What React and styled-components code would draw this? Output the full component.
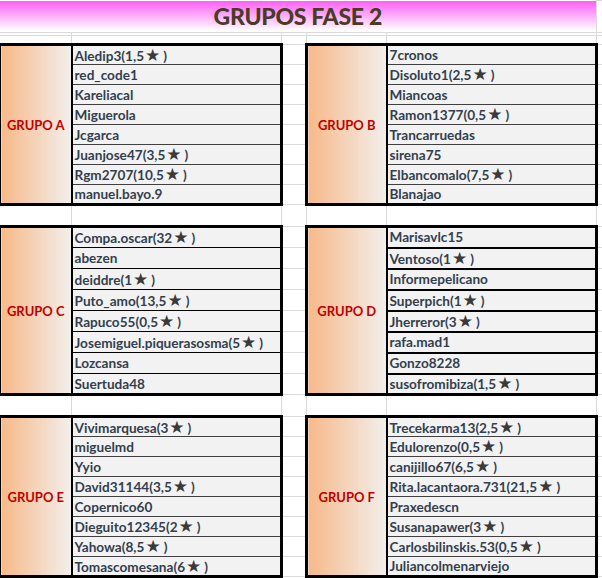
import styled, { createGlobalStyle } from "styled-components";

const GlobalStyles = createGlobalStyle`
  html, body {
    margin: 0;
    padding: 0;
    background: #ffffff;
  }
  body {
    font-family: Lato, "Open Sans", sans-serif;
    overflow: hidden;
  }
`;

const groups = [
  {
    left: {
      name: "GRUPO A",
      players: ["Aledip3(1,5★)", "red_code1", "Kareliacal", "Miguerola", "Jcgarca", "Juanjose47(3,5★)", "Rgm2707(10,5★)", "manuel.bayo.9"],
      line: "1px solid #404040",
    },
    right: {
      name: "GRUPO B",
      players: ["7cronos", "Disoluto1(2,5★)", "Miancoas", "Ramon1377(0,5★)", "Trancarruedas", "sirena75", "Elbancomalo(7,5★)", "Blanajao"],
      line: "1px solid #404040",
    },
    rowHeight: 20,
  },
  {
    left: {
      name: "GRUPO C",
      players: ["Compa.oscar(32★)", "abezen", "deiddre(1★)", "Puto_amo(13,5★)", "Rapuco55(0,5★)", "Josemiguel.piquerasosma(5★)", "Lozcansa", "Suertuda48"],
      line: "1px solid #000000",
    },
    right: {
      name: "GRUPO D",
      players: ["Marisavlc15", "Ventoso(1★)", "Informepelicano", "Superpich(1★)", "Jherreror(3★)", "rafa.mad1", "Gonzo8228", "susofromibiza(1,5★)"],
      line: "2px solid #000000",
    },
    rowHeight: 21,
  },
  {
    left: {
      name: "GRUPO E",
      players: ["Vivimarquesa(3★)", "miguelmd", "Yyio", "David31144(3,5★)", "Copernico60", "Dieguito12345(2★)", "Yahowa(8,5★)", "Tomascomesana(6★)"],
      line: "1px solid #404040",
    },
    right: {
      name: "GRUPO F",
      players: ["Trecekarma13(2,5★)", "Edulorenzo(0,5★)", "canijillo67(6,5★)", "Rita.lacantaora.731(21,5★)", "Praxedescn", "Susanapawer(3★)", "Carlosbilinskis.53(0,5★)", "Juliancolmenarviejo"],
      line: "1px solid #404040",
    },
    rowHeight: 20,
  },
];

const Sheet = styled.table`
  border-collapse: collapse;
  table-layout: fixed;
  width: 604px;
  margin-left: -2px;
`;

const Col = styled.col`
  width: ${(p) => p.$w}px;
`;

const Row = styled.tr`
  height: ${(p) => p.$h}px;
`;

const Cell = styled.td`
  border: 1px solid #dadada;
  padding: 0;
`;

const TitleCell = styled.td`
  border: none;
  border-bottom: 1px solid #dadada;
  padding: 0;
  background: linear-gradient(#ff5ef5, #ffffff 96%);
  text-align: center;
  vertical-align: middle;
  color: #4a3b27;
  font-weight: 900;
  font-size: 23px;
  letter-spacing: -0.3px;
`;

const LabelCell = styled.td`
  border: 3px solid #000000;
  border-right: 2px solid #000000;
  padding: 0;
  background: linear-gradient(to right, #f7b989, #f2efec);
  text-align: center;
  vertical-align: middle;
  color: #c00000;
  font-weight: 700;
  font-size: 13px;
`;

const NameCell = styled.td`
  border-left: 2px solid #000000;
  border-right: 3px solid #000000;
  border-top: ${(p) => (p.$first ? "3px solid #000000" : p.$line)};
  border-bottom: ${(p) => (p.$last ? "3px solid #000000" : p.$line)};
  padding: 0 0 0 2px;
  background: #f2f2f2;
  color: #333f4f;
  font-weight: 700;
  font-size: 13.6px;
  white-space: nowrap;
  vertical-align: middle;
  line-height: 16px;
`;

const Star = styled.span`
  font-family: "DejaVu Sans", sans-serif;
  font-size: 17px;
  line-height: 16px;
  color: #3a3a3a;
  margin: 0 3px 0 1px;
`;

const PlayerName = ({ text }) => {
  const parts = text.split("★");
  if (parts.length === 1) return text;
  return (
    <>
      {parts[0]}
      <Star>★</Star>
      {parts[1]}
    </>
  );
};

const GroupRows = ({ group }) => {
  const { left, right, rowHeight } = group;
  return left.players.map((_, i) => {
    const first = i === 0;
    const last = i === left.players.length - 1;
    return (
      <Row key={i} $h={rowHeight}>
        {first && <LabelCell rowSpan={8}>{left.name}</LabelCell>}
        <NameCell $first={first} $last={last} $line={left.line}>
          <PlayerName text={left.players[i]} />
        </NameCell>
        <Cell />
        {first && <LabelCell rowSpan={8}>{right.name}</LabelCell>}
        <NameCell $first={first} $last={last} $line={right.line}>
          <PlayerName text={right.players[i]} />
        </NameCell>
        <Cell />
      </Row>
    );
  });
};

const BlankRow = ({ h }) => (
  <Row $h={h}>
    <Cell />
    <Cell />
    <Cell />
    <Cell />
    <Cell />
    <Cell />
  </Row>
);

const App = () => {
  return (
    <>
      <GlobalStyles />
      <Sheet>
        <colgroup>
          <Col $w={72} />
          <Col $w={210} />
          <Col $w={25} />
          <Col $w={80} />
          <Col $w={210} />
          <Col $w={7} />
        </colgroup>
        <tbody>
          <Row $h={32}>
            <TitleCell colSpan={5}>GRUPOS FASE 2</TitleCell>
            <Cell />
          </Row>
          <BlankRow h={3} />
          <BlankRow h={9} />
          <GroupRows group={groups[0]} />
          <BlankRow h={22} />
          <GroupRows group={groups[1]} />
          <BlankRow h={22} />
          <GroupRows group={groups[2]} />
        </tbody>
      </Sheet>
    </>
  );
};

export default App;
